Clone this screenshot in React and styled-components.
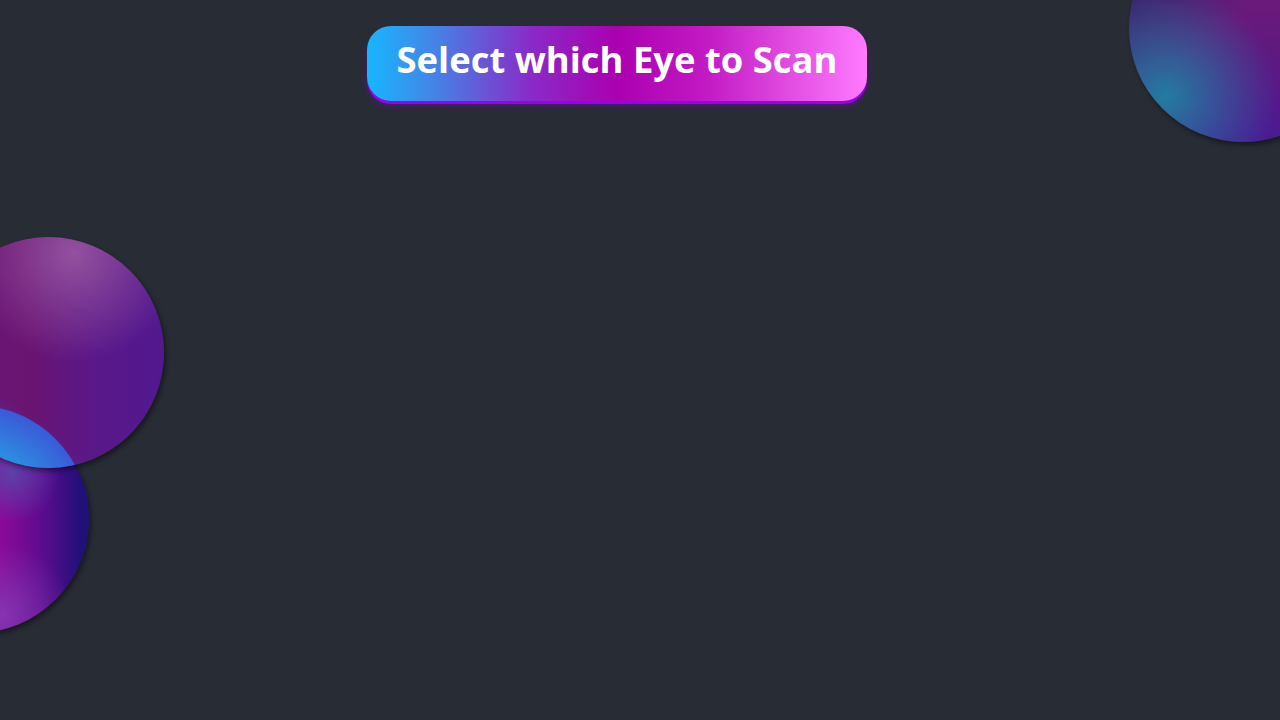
import React from "react";
import styled, { createGlobalStyle } from "styled-components";

const GlobalStyle = createGlobalStyle`
  html, body {
    margin: 0;
    padding: 0;
    background: #282c34;
    overflow: hidden;
  }
  #root {
    min-height: 100vh;
  }
`;

const Page = styled.div`
  position: relative;
  width: 100vw;
  height: 100vh;
  overflow: hidden;
  background: #282c34;
  font-family: "Open Sans", "Noto Sans", sans-serif;
`;

const Header = styled.div`
  display: flex;
  padding: 26px 0 0 367px;
`;

const TitleButton = styled.button`
  width: 500px;
  height: 75px;
  border: none;
  border-radius: 24px;
  background: linear-gradient(
    90deg,
    #16b6ff 0%,
    #3f8ae8 12%,
    #8a2ac8 33%,
    #ab00b0 50%,
    #c21ac4 68%,
    #e24ee2 85%,
    #ff7bff 100%
  );
  box-shadow: 0 3px 0 #9a00ee, 0 5px 6px rgba(120, 0, 200, 0.45);
  color: #ffffff;
  font-family: "Open Sans", "Noto Sans", sans-serif;
  font-weight: 700;
  font-size: 36.4px;
  cursor: pointer;
  padding: 0 0 10px;
`;

const Orb = styled.div`
  position: absolute;
  width: ${(p) => p.size}px;
  height: ${(p) => p.size}px;
  left: ${(p) => p.x}px;
  top: ${(p) => p.y}px;
  border-radius: 50%;
  box-shadow: 2px 3px 5px rgba(0, 0, 0, 0.45);
`;

const CornerOrb = styled(Orb)`
  background:
    radial-gradient(circle at 16% 80%, rgba(31, 130, 162, 0.95) 0%, rgba(31, 130, 162, 0) 42%),
    linear-gradient(135deg, #2a2468 10%, rgba(42, 36, 104, 0) 45%),
    linear-gradient(180deg, #6e1a78 30%, #62197e 55%, #4a1a94 100%);
`;

/* the lens where it overlaps the lower orb is painted inside this one,
   as a circle centred on the lower orb */
const UpperOrb = styled(Orb)`
  z-index: 2;
  background:
    radial-gradient(circle 114px at 42px 282px, #2a90e0 0px, #2c8ce0 70px, #3a5ad8 113px, rgba(58, 90, 216, 0) 114px),
    radial-gradient(circle at 61% 7%, rgba(150, 84, 160, 0.95) 0%, rgba(150, 84, 160, 0) 42%),
    linear-gradient(40deg, #3c52a0 0%, rgba(60, 82, 160, 0) 32%),
    linear-gradient(90deg, #4a2680 0%, #6a1474 30%, #6a1472 42%, #5a1888 68%, #52198f 100%);
`;

const LowerOrb = styled(Orb)`
  z-index: 1;
  background:
    radial-gradient(circle at 66% 30%, rgba(90, 70, 170, 0.9) 0%, rgba(90, 70, 170, 0) 22%),
    radial-gradient(circle at 62% 92%, rgba(130, 60, 180, 0.85) 0%, rgba(130, 60, 180, 0) 28%),
    linear-gradient(90deg, #8c0a98 0%, #8a0a98 62%, #5a0c8e 80%, #22107a 96%);
`;

export default function App() {
  return (
    <Page>
      <GlobalStyle />
      <Header>
        <TitleButton>Select which Eye to Scan</TitleButton>
      </Header>
      <CornerOrb size={228} x={1129} y={-86} />
      <LowerOrb size={228} x={-139} y={405} />
      <UpperOrb size={231} x={-67} y={237} />
    </Page>
  );
}
